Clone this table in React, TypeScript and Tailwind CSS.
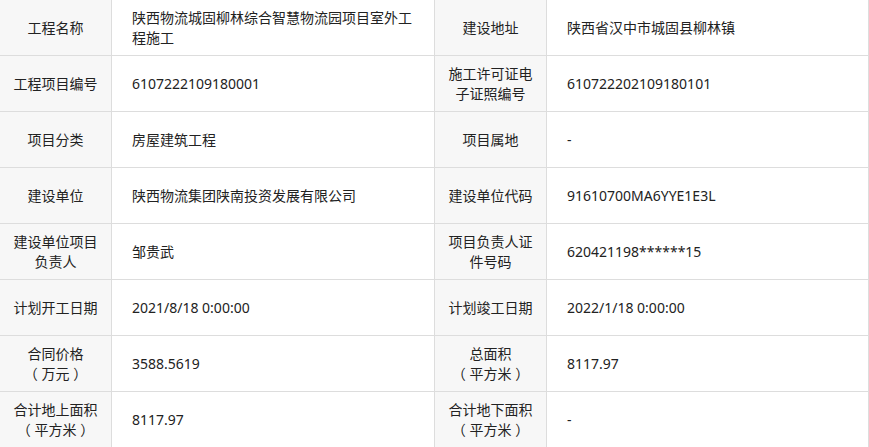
const rows: [React.ReactNode, string, React.ReactNode, string][] = [
  ['工程名称', '陕西物流城固柳林综合智慧物流园项目室外工程施工', '建设地址', '陕西省汉中市城固县柳林镇'],
  ['工程项目编号', '6107222109180001', '施工许可证电子证照编号', '610722202109180101'],
  ['项目分类', '房屋建筑工程', '项目属地', '-'],
  ['建设单位', '陕西物流集团陕南投资发展有限公司', '建设单位代码', '91610700MA6YYE1E3L'],
  ['建设单位项目负责人', '邹贵武', '项目负责人证件号码', '620421198******15'],
  ['计划开工日期', '2021/8/18 0:00:00', '计划竣工日期', '2022/1/18 0:00:00'],
  [<>合同价格<br />（ 万元 ）</>, '3588.5619', <>总面积<br />（ 平方米 ）</>, '8117.97'],
  [<>合计地上面积<br />（ 平方米 ）</>, '8117.97', <>合计地下面积<br />（ 平方米 ）</>, '-'],
];

function Label({ children }: { children: React.ReactNode }) {
  return (
    <div className="h-[56px] flex items-center justify-center text-center px-[13px] bg-[#f7f7f7] border-r border-b border-[#dddddd]">
      <span>{children}</span>
    </div>
  );
}

function Value({ children }: { children: React.ReactNode }) {
  return (
    <div className="h-[56px] flex items-center pl-5 pr-5 bg-white border-r border-b border-[#dddddd]">
      <span>{children}</span>
    </div>
  );
}

export default function App() {
  return (
    <div
      className="w-[869px] bg-white text-[14px] leading-[20px] text-[#222]"
      style={{ fontFamily: '"Noto Sans", "Noto Sans CJK SC", sans-serif' }}
    >
      <div className="grid grid-cols-[112px_323px_112px_322px]">
        {rows.map((r, i) => (
          <div key={i} className="contents">
            <Label>{r[0]}</Label>
            <Value>{r[1]}</Value>
            <Label>{r[2]}</Label>
            <Value>{r[3]}</Value>
          </div>
        ))}
      </div>
    </div>
  );
}
